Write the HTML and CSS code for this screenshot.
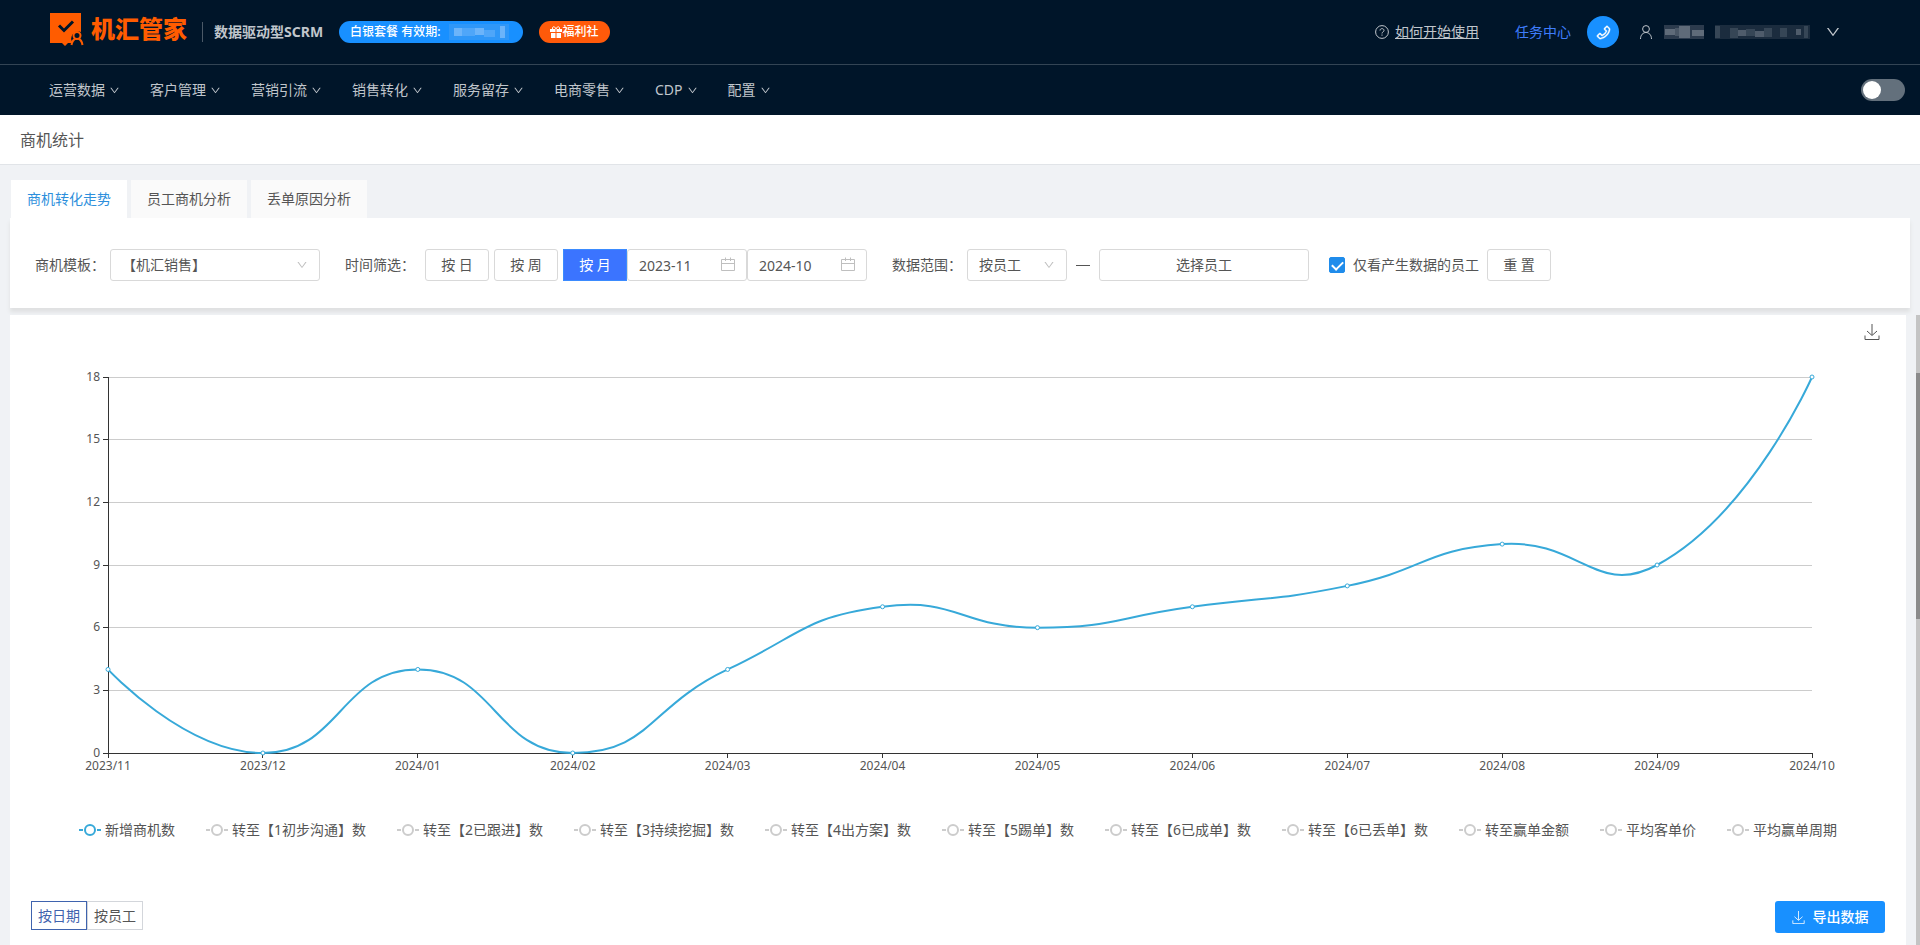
FILE: index.html
```html
<!DOCTYPE html>
<html lang="zh-CN">
<head>
    <meta charset="UTF-8">
    <meta name="viewport" content="width=device-width, initial-scale=1.0">
    <title>商机统计 - 机汇管家</title>
    <link rel="stylesheet" href="styles.css">
</head>
<body>
    <!-- 公用图标 -->
    <svg class="symbols" aria-hidden="true">
        <symbol id="icon-down" viewBox="0 0 1024 1024">
            <path d="M884 256h-75c-5.1 0-9.9 2.5-12.9 6.6L512 654.2 227.9 262.6c-3-4.1-7.8-6.6-12.9-6.6h-75c-6.5 0-10.3 7.4-6.5 12.7l352.6 486.1c12.8 17.6 39 17.6 51.7 0l352.6-486.1c3.9-5.3.1-12.7-6.4-12.7z"/>
        </symbol>
        <symbol id="icon-calendar" viewBox="0 0 14 14">
            <path d="M.5 2.500h13v11H.5zM.5 6.500h13M4.500 .5v3.500M9.500 .5v3.500" fill="none" stroke="currentColor"/>
        </symbol>
        <symbol id="icon-download" viewBox="0 0 16 16">
            <path d="M8 0v11M3 7l5 4.500L13 7M1 11.500v4h14v-4" fill="none" stroke="currentColor"/>
        </symbol>
    </svg>

    <header>
        <div class="topbar">
            <a class="logo" href="#">
                <svg width="34" height="34" viewBox="0 0 34 34">
                    <path d="M0 1h31v19a7 7 0 0 0-8 11h-5l-3 3-3-3H0z" fill="#ff5c00"/>
                    <path d="M9 13.500l5 5 9-9" fill="none" stroke="#001529" stroke-width="3"/>
                    <circle cx="27" cy="23.500" r="3.500" fill="none" stroke="#ff5c00" stroke-width="2"/>
                    <path d="M21.500 33c.5-3.500 2-5.500 4-6.500M28.500 26.500c2 1 3.500 3 4 6.500" fill="none" stroke="#ff5c00" stroke-width="2"/>
                </svg>
                <span>机汇管家</span>
            </a>
            <span class="slogan">数据驱动型SCRM</span>
            <div class="pill pill-plan">
                <span>白银套餐 有效期:</span>
                <svg class="mask" width="60" height="16" viewBox="0 0 60 16">
                    <path d="M0 0h60v16H0z" fill="#2f97f8"/>
                    <path d="M5 4h8v8H5zM26 4h9v7h-9zM51 2h5v12h-5z" fill="#6cb4fa"/>
                    <path d="M13 4h13v8H13zM35 6h11v7H35z" fill="#4fa6f9"/>
                </svg>
            </div>
            <a class="pill pill-welfare" href="#">
                <svg width="12" height="12" viewBox="0 0 12 12" fill="#fff">
                    <path d="M0 3h5.500v3H0zM6.500 3H12v3H6.500zM1 7h4.500v5H1zM6.500 7H11v5H6.500z"/>
                    <path d="M6 3C5 0 2 0 2.500 3M6 3c1-3 4-3 3.500 0" fill="none" stroke="#fff"/>
                </svg>
                <span>福利社</span>
            </a>

            <div class="user-area">
                <a class="help" href="#">
                    <svg width="14" height="14" viewBox="0 0 14 14" fill="none" stroke="currentColor">
                        <circle cx="7" cy="7" r="6.400"/>
                        <path d="M5 5.500C5 3 9 3 9 5.500 9 7 7 6.800 7 8.500M7 9.500v1.200"/>
                    </svg>
                    <span>如何开始使用</span>
                </a>
                <a class="task" href="#">任务中心</a>
                <button class="phone" type="button" aria-label="电话">
                    <svg width="17" height="17" viewBox="0 0 1024 1024" fill="#fff" stroke="#fff" stroke-width="24">
                        <path d="M877.1 238.7L770.6 132.3c-13-13-30.4-20.3-48.8-20.3s-35.8 7.2-48.8 20.3L558.3 246.8c-13 13-20.3 30.5-20.3 48.9 0 18.5 7.2 35.8 20.3 48.9l89.6 89.7a405.46 405.46 0 01-86.4 127.3c-36.7 36.9-79.6 66-127.2 86.6l-89.6-89.7c-13-13-30.4-20.3-48.8-20.3a68.2 68.2 0 00-48.8 20.3L132.3 673c-13 13-20.3 30.5-20.3 48.9 0 18.5 7.2 35.8 20.3 48.9l106.4 106.4c22.2 22.2 52.8 34.9 84.2 34.9 6.5 0 12.8-.5 19.2-1.6 132.4-21.8 263.8-92.3 369.9-198.3C818 606 888.4 474.6 910.4 342.1c6.3-37.6-6.3-76.3-33.3-103.4zm-37.6 91.5c-19.5 117.9-82.9 235.5-178.4 331s-213 158.9-330.9 178.4c-14.8 2.5-30-2.5-40.8-13.2L184.9 721.9 295.7 611l119.8 120 .9.9 21.6-8a481.29 481.29 0 00285.7-285.8l8-21.6-120.8-120.7 110.8-110.9 104.5 104.5c10.8 10.8 15.8 26 13.3 40.8z"/>
                    </svg>
                </button>
                <button class="account" type="button" aria-label="账户">
                    <svg width="14" height="14" viewBox="0 0 14 14" fill="none" stroke="currentColor">
                        <circle cx="7" cy="4" r="3.400"/>
                        <path d="M1.500 14c0-4 2.500-6.500 5.500-6.500s5.500 2.500 5.500 6.500"/>
                    </svg>
                    <svg class="mask" width="146" height="16" viewBox="0 0 146 16">
                        <path d="M0 1h40v14H0z" fill="#2c3b4d"/>
                        <path d="M1 5h10v6H1zM15 2h11v12H15zM28 6h12v6H28z" fill="#5f6b79"/>
                        <path d="M11 4h4v8h-4z" fill="#4a5766"/>
                        <path d="M51 1h95v14H51z" fill="#1b2c3e"/>
                        <path d="M51 2h5v12h-5zM66 4h8v10h-8zM82 5h9v7h-9zM100 4h8v9h-8zM116 4h7v9h-7zM140 2h4v12h-4z" fill="#364656"/>
                        <path d="M74 6h8v6h-8zM91 7h9v6h-9zM132 5h5v6h-5z" fill="#4f5c6b"/>
                    </svg>
                    <svg class="account-arrow" width="16" height="16"><use href="#icon-down"/></svg>
                </button>
            </div>
        </div>

        <nav>
            <ul>
                <li><a href="#">运营数据<svg width="11" height="11"><use href="#icon-down"/></svg></a></li>
                <li><a href="#">客户管理<svg width="11" height="11"><use href="#icon-down"/></svg></a></li>
                <li><a href="#">营销引流<svg width="11" height="11"><use href="#icon-down"/></svg></a></li>
                <li><a href="#">销售转化<svg width="11" height="11"><use href="#icon-down"/></svg></a></li>
                <li><a href="#">服务留存<svg width="11" height="11"><use href="#icon-down"/></svg></a></li>
                <li><a href="#">电商零售<svg width="11" height="11"><use href="#icon-down"/></svg></a></li>
                <li><a href="#">CDP<svg width="11" height="11"><use href="#icon-down"/></svg></a></li>
                <li><a href="#">配置<svg width="11" height="11"><use href="#icon-down"/></svg></a></li>
            </ul>
            <input class="switch" type="checkbox" role="switch" aria-label="切换导航">
        </nav>
    </header>

    <h1>商机统计</h1>

    <main>
        <div class="tabs" role="tablist">
            <button class="tab active" type="button" role="tab" aria-selected="true">商机转化走势</button>
            <button class="tab" type="button" role="tab">员工商机分析</button>
            <button class="tab" type="button" role="tab">丢单原因分析</button>
        </div>

        <form class="filters">
            <div class="filter-group">
                <label for="template">商机模板：</label>
                <div class="select select-wide">
                    <select id="template"><option>【机汇销售】</option></select>
                    <svg width="12" height="12"><use href="#icon-down"/></svg>
                </div>
            </div>
            <div class="filter-group filter-time">
                <label for="start">时间筛选：</label>
                <div class="periods">
                    <button class="btn" type="button">按 日</button>
                    <button class="btn" type="button">按 周</button>
                    <div class="month">
                        <button class="btn selected" type="button">按 月</button>
                        <div class="date">
                            <input type="text" id="start" value="2023-11">
                            <svg width="14" height="14"><use href="#icon-calendar"/></svg>
                        </div>
                        <div class="date">
                            <input type="text" id="end" value="2024-10" aria-label="结束月份">
                            <svg width="14" height="14"><use href="#icon-calendar"/></svg>
                        </div>
                    </div>
                </div>
            </div>
            <div class="filter-group">
                <label for="scope">数据范围：</label>
                <div class="select">
                    <select id="scope"><option>按员工</option></select>
                    <svg width="12" height="12"><use href="#icon-down"/></svg>
                </div>
                <span class="dash"></span>
                <button class="btn btn-wide" type="button">选择员工</button>
            </div>
            <div class="filter-group filter-last">
                <input class="check" type="checkbox" id="onlyData" checked>
                <label for="onlyData">仅看产生数据的员工</label>
                <button class="btn" type="reset">重 置</button>
            </div>
        </form>

        <div class="content">
            <section class="panel">
                <button class="save" type="button" aria-label="下载图表">
                    <svg width="16" height="16"><use href="#icon-download"/></svg>
                </button>
                <svg id="chart" class="chart" role="img" aria-label="商机转化走势"></svg>
                <ul class="legend" id="legend"></ul>

                <div class="toolbar">
                    <div class="group-by">
                        <button class="active" type="button">按日期</button>
                        <button type="button">按员工</button>
                    </div>
                    <button class="export" type="button">
                        <svg width="13" height="13"><use href="#icon-download"/></svg>
                        导出数据
                    </button>
                </div>
            </section>
            <div class="scrollbar"><div class="thumb"></div></div>
        </div>
    </main>

    <script src="script.js"></script>
</body>
</html>
```
FILE: styles.css
```css
* {
    box-sizing: border-box;
}
body {
    margin: 0;
    min-height: 100vh;
    display: flex;
    flex-direction: column;
    background-color: #f0f2f5;
    color: #555;
    font-family: "Noto Sans", "Noto Sans CJK SC", sans-serif;
    font-size: 14px;
    line-height: 22px;
    overflow: hidden;
}
button, input, select {
    font: inherit;
    color: inherit;
    margin: 0;
}
button {
    cursor: pointer;
    padding: 0;
}
a {
    color: inherit;
    text-decoration: none;
}
ul {
    list-style: none;
    margin: 0;
    padding: 0;
}
svg {
    flex: none;
}
use {
    fill: currentColor;
}
.symbols {
    position: absolute;
    width: 0;
    height: 0;
}

/* 顶部 */
header {
    background-color: #001529;
    color: #c0c6cc;
}
.topbar {
    display: flex;
    align-items: center;
    height: 65px;
    padding: 0 79px 0 50px;
    border-bottom: 1px solid #334454;
}
.logo {
    display: flex;
    align-items: center;
    gap: 7px;
    padding-right: 15px;
    margin-bottom: 6px;
    color: #ff5c00;
    font-size: 24px;
    font-weight: 900;
}
.slogan {
    padding-left: 11px;
    border-left: 1px solid #4b5967;
    font-weight: bold;
    line-height: 20px;
}
.pill {
    display: flex;
    align-items: center;
    height: 22px;
    margin-left: 16px;
    padding: 0 11px;
    border-radius: 11px;
    color: #fff;
    font-size: 12px;
    font-weight: 500;
}
.pill-plan {
    gap: 9px;
    padding-right: 14px;
    background-color: #1890ff;
}
.pill-welfare {
    background-color: #ff5a0a;
}
.user-area {
    display: flex;
    align-items: center;
    margin-left: auto;
}
.help {
    display: flex;
    align-items: center;
    gap: 6px;
    text-decoration: underline;
}
.task {
    margin: 0 16px 0 36px;
    color: #3f7dfb;
}
.phone {
    display: flex;
    align-items: center;
    justify-content: center;
    width: 32px;
    height: 32px;
    border: none;
    border-radius: 50%;
    background-color: #1890ff;
}
.account {
    display: flex;
    align-items: center;
    gap: 11px;
    margin-left: 20px;
    border: none;
    background: none;
}
.account-arrow {
    margin-left: 4px;
}
nav {
    display: flex;
    align-items: center;
    justify-content: space-between;
    height: 50px;
    padding: 0 15px 0 49px;
}
nav ul {
    display: flex;
    gap: 30px;
}
nav li a {
    display: flex;
    align-items: center;
    gap: 4px;
}
.switch {
    appearance: none;
    width: 44px;
    height: 22px;
    padding: 2px;
    border-radius: 11px;
    background-color: #63707c;
}
.switch::before {
    content: '';
    display: block;
    width: 18px;
    height: 18px;
    border-radius: 50%;
    background-color: #fff;
}

/* 标题 */
h1 {
    margin: 0;
    padding: 13px 20px 11px;
    border-bottom: 1px solid #e1e4e8;
    background-color: #fff;
    font-size: 16px;
    font-weight: normal;
    line-height: 25px;
}

/* 标签页 */
main {
    flex: 1;
    display: flex;
    flex-direction: column;
    padding: 15px 0 0 10px;
}
.tabs {
    display: flex;
    gap: 4px;
    padding-left: 1px;
}
.tab {
    height: 38px;
    padding: 0 16px;
    border: none;
    background-color: #fafafa;
}
.tab.active {
    background-color: #fff;
    color: #2d8fdc;
}

/* 筛选 */
.filters {
    display: flex;
    align-items: center;
    gap: 25px;
    height: 90px;
    margin-right: 10px;
    padding: 4px 25px 0;
    background-color: #fff;
    box-shadow: 0 4px 4px #dfe0e1;
    white-space: nowrap;
}
.filter-group {
    display: flex;
    align-items: center;
    gap: 5px;
}
.filter-time {
    gap: 10px;
}
.filter-last {
    gap: 8px;
    margin-left: -5px;
}
.periods {
    display: flex;
    gap: 5px;
}
.month {
    display: flex;
}
.btn {
    width: 64px;
    height: 32px;
    border: 1px solid #d9d9d9;
    border-radius: 3px;
    background-color: #fff;
}
.btn-wide {
    width: 210px;
}
.btn.selected {
    border-color: #3b8bff;
    border-radius: 0;
    background-color: #3b74ff;
    color: #fff;
}
.select, .date {
    position: relative;
    width: 100px;
    height: 32px;
}
.date {
    width: 120px;
}
.select-wide {
    width: 210px;
}
.select select, .date input {
    appearance: none;
    width: 100%;
    height: 100%;
    padding: 0 11px;
    border: 1px solid #d9d9d9;
    border-radius: 3px;
    background-color: #fff;
}
.select svg, .date svg {
    position: absolute;
    top: 10px;
    right: 12px;
    color: #bfbfbf;
    pointer-events: none;
}
.date svg {
    top: 8px;
}
.dash {
    width: 14px;
    height: 1px;
    margin: 0 4px;
    background-color: #555;
}
.check {
    appearance: none;
    width: 16px;
    height: 16px;
    border: 1px solid #d9d9d9;
    border-radius: 2px;
}
.check:checked {
    border-color: #1f8ceb;
    background-color: #1f8ceb;
}
.check:checked::before {
    content: '';
    display: block;
    width: 5px;
    height: 9px;
    margin: 1px auto;
    border: solid #fff;
    border-width: 0 2px 2px 0;
    transform: rotate(45deg);
}

/* 图表 */
.content {
    flex: 1;
    display: flex;
    gap: 10px;
    margin-top: 7px;
    position: relative;
}
.panel {
    flex: 1;
    min-width: 0;
    position: relative;
    background-color: #fff;
}
.scrollbar {
    width: 4px;
    padding-top: 58px;
    background-color: #c4c4c4;
}
.thumb {
    height: 246px;
    background-color: #8b8b8b;
}
.save {
    position: absolute;
    top: 9px;
    right: 26px;
    height: 16px;
    border: none;
    background: none;
}
.save svg {
    display: block;
}
.chart {
    display: block;
    width: 100%;
    height: 504px;
}
.chart text {
    font-size: 12px;
    fill: #555;
}
.grid-line {
    stroke: #ccc;
}
.axis {
    stroke: #333;
}
.curve {
    fill: none;
    stroke: #37a9d9;
    stroke-width: 2;
}
.dot {
    fill: #fff;
    stroke: #37a9d9;
}
.legend {
    display: flex;
    justify-content: center;
    gap: 31px;
    white-space: nowrap;
}
.legend button {
    display: flex;
    align-items: center;
    gap: 4px;
    border: none;
    background: none;
}
.legend svg {
    color: #ccc;
}
.legend .active svg {
    color: #37a9d9;
}
.toolbar {
    display: flex;
    align-items: flex-start;
    justify-content: space-between;
    padding: 60px 21px 12px;
}
.group-by {
    display: flex;
}
.group-by button {
    width: 56px;
    height: 29px;
    border: 1px solid #d3d6db;
    background-color: #fff;
}
.group-by .active {
    border-color: #3f63ae;
    color: #3f63ae;
}
.export {
    display: flex;
    align-items: center;
    justify-content: center;
    gap: 8px;
    width: 110px;
    height: 32px;
    border: none;
    border-radius: 3px;
    background-color: #1890ff;
    color: #fff;
    font-weight: 500;
}
```
FILE: script.js
```js
const months = ['2023/11', '2023/12', '2024/01', '2024/02', '2024/03', '2024/04',
    '2024/05', '2024/06', '2024/07', '2024/08', '2024/09', '2024/10'];
const values = [4, 0, 4, 0, 4, 7, 6, 7, 8, 10, 9, 18];
const series = ['新增商机数', '转至【1初步沟通】数', '转至【2已跟进】数', '转至【3持续挖掘】数',
    '转至【4出方案】数', '转至【5踢单】数', '转至【6已成单】数', '转至【6已丢单】数',
    '转至赢单金额', '平均客单价', '平均赢单周期'];

const chart = document.getElementById('chart');
const grid = { left: 98, right: 94, top: 62, height: 376 };
const maxValue = 18;

// 平滑曲线，控制点按相邻两段长度分配
function curvePath(points) {
    const top = grid.top;
    const bottom = grid.top + grid.height;
    const clamp = y => Math.min(bottom, Math.max(top, y));
    let d = `M${points[0].x} ${points[0].y}`;
    let cp = points[0];
    for (let i = 1; i < points.length; i++) {
        const prev = points[i - 1];
        const p = points[i];
        const next = points[i + 1];
        let cpIn = p;
        let cpOut = p;
        if (next) {
            const lenPrev = Math.hypot(p.x - prev.x, p.y - prev.y);
            const lenNext = Math.hypot(next.x - p.x, next.y - p.y);
            const ratio = lenNext / (lenPrev + lenNext);
            const vx = next.x - prev.x;
            const vy = next.y - prev.y;
            cpIn = { x: p.x - vx * 0.5 * (1 - ratio), y: clamp(p.y - vy * 0.5 * (1 - ratio)) };
            cpOut = { x: p.x + vx * 0.5 * ratio, y: clamp(p.y + vy * 0.5 * ratio) };
        }
        d += `C${cp.x} ${cp.y} ${cpIn.x} ${cpIn.y} ${p.x} ${p.y}`;
        cp = cpOut;
    }
    return d;
}

function drawChart() {
    const right = chart.clientWidth - grid.right;
    const bottom = grid.top + grid.height;
    let html = '';

    for (let v = 0; v <= maxValue; v += 3) {
        const y = Math.floor(bottom - v / maxValue * grid.height) + 0.5;
        if (v > 0) {
            html += `<line class="grid-line" x1="${grid.left}" y1="${y}" x2="${right}" y2="${y}"/>`;
        }
        html += `<line class="axis" x1="${grid.left - 5}" y1="${y}" x2="${grid.left}" y2="${y}"/>`;
        html += `<text x="${grid.left - 8}" y="${y + 3}" text-anchor="end">${v}</text>`;
    }

    const points = values.map((v, i) => ({
        x: grid.left + (right - grid.left) * i / (values.length - 1),
        y: bottom - v / maxValue * grid.height
    }));
    points.forEach((p, i) => {
        const x = Math.floor(p.x) + 0.5;
        html += `<line class="axis" x1="${x}" y1="${bottom}" x2="${x}" y2="${bottom + 5}"/>`;
        html += `<text x="${p.x}" y="${bottom + 17}" text-anchor="middle">${months[i]}</text>`;
    });
    html += `<path class="axis" d="M${grid.left + 0.5} ${grid.top}V${bottom + 0.5}H${right}" fill="none"/>`;
    html += `<path class="curve" d="${curvePath(points)}"/>`;
    points.forEach(p => {
        html += `<circle class="dot" cx="${p.x}" cy="${p.y}" r="2"/>`;
    });
    chart.innerHTML = html;
}

document.getElementById('legend').innerHTML = series.map((name, i) => `
    <li><button type="button"${i === 0 ? ' class="active"' : ''}>
        <svg width="22" height="14" viewBox="0 0 22 14" fill="none" stroke="currentColor" stroke-width="2">
            <path d="M0 7h4M18 7h4"/><circle cx="11" cy="7" r="5"/>
        </svg>${name}</button></li>`).join('');

drawChart();
window.addEventListener('resize', drawChart);
```
